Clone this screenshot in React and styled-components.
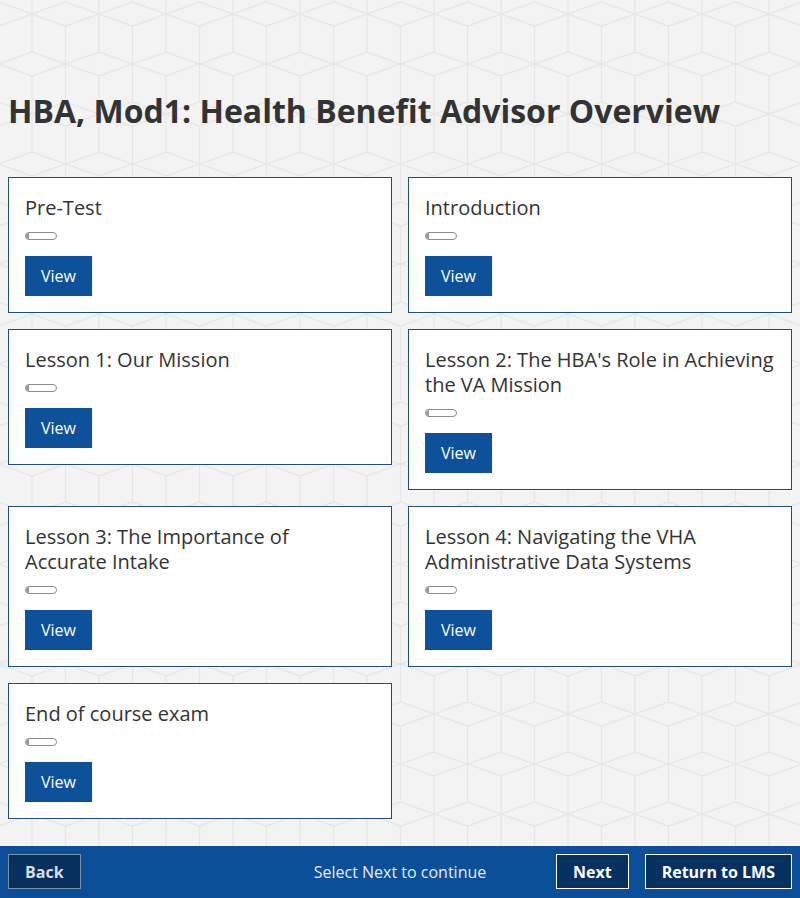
import React from "react";
import styled, { createGlobalStyle } from "styled-components";

const tile = `<svg xmlns='http://www.w3.org/2000/svg' width='67' height='100' viewBox='0 0 67 100'><g fill='none' stroke='#e6e6e6' stroke-width='1.3'><path d='M0 12 L33.5 0 L67 12 L33.5 24 Z'/><path d='M33.5 24 V62'/><path d='M0 12 V50 M67 12 V50'/><path d='M0 50 L33.5 62 L67 50'/><path d='M0 74 L33.5 62 L67 74'/><path d='M0 74 V100 M67 74 V100 M0 0 V12 M67 0 V12'/><path d='M33.5 62 V100'/></g></svg>`;

const GlobalStyle = createGlobalStyle`
  html, body {
    margin: 0;
    padding: 0;
  }
  body {
    font-family: "Open Sans", "Noto Sans", sans-serif;
    background-color: #f3f3f3;
    background-image: url("data:image/svg+xml,${encodeURIComponent(tile)}");
    background-position: 32px 2px;
    color: #333;
  }
  * { box-sizing: border-box; }
`;

const Page = styled.div`
  min-height: 100vh;
  display: flex;
  flex-direction: column;
`;

const Main = styled.main`
  flex: 1;
  padding: 0 8px 16px;
`;

const Title = styled.h1`
  margin: 89px 0 44px;
  font-size: 32px;
  line-height: 44px;
  font-weight: 700;
  color: #333;
`;

const Grid = styled.div`
  display: grid;
  grid-template-columns: 1fr 1fr;
  gap: 16px;
  align-items: start;
`;

const Card = styled.section`
  background: #fff;
  border: 1px solid #1f4e79;
  padding: 17px 16px 16px;
  display: flex;
  flex-direction: column;
  align-items: flex-start;
`;

const CardTitle = styled.h2`
  margin: 0;
  font-size: 20px;
  line-height: 25px;
  font-weight: 400;
  color: #333;
`;

const Progress = styled.div`
  margin-top: 12px;
  width: 32px;
  height: 8px;
  border: 1px solid #8c8c8c;
  border-radius: 4px;
  background: #fff;
  overflow: hidden;
  display: flex;
`;

const ProgressFill = styled.div`
  width: 3px;
  background: #9a9a9a;
`;

const ViewButton = styled.button`
  margin-top: 16px;
  height: 40px;
  padding: 0 16px;
  border: none;
  background: #0c5199;
  color: #fff;
  font-family: inherit;
  font-size: 16px;
  cursor: pointer;
`;

const Footer = styled.footer`
  height: 52px;
  background: #0b4f99;
  padding: 8px;
  display: grid;
  grid-template-columns: 1fr auto 1fr;
  align-items: start;
`;

const NavButton = styled.button`
  height: 35px;
  padding: 1px 16px 0;
  background: #06305e;
  border: 1px solid ${(p) => (p.$disabled ? "#7d8fa6" : "#ffffff")};
  color: ${(p) => (p.$disabled ? "#d6dde6" : "#ffffff")};
  font-family: inherit;
  font-size: 16px;
  font-weight: 700;
  cursor: pointer;
`;

const Message = styled.div`
  color: #e4ebf4;
  font-size: 16px;
  line-height: 37px;
`;

const Left = styled.div`
  display: flex;
  justify-content: flex-start;
`;

const Right = styled.div`
  display: flex;
  justify-content: flex-end;
  gap: 16px;
`;

const lessons = [
  "Pre-Test",
  "Introduction",
  "Lesson 1: Our Mission",
  "Lesson 2: The HBA's Role in Achieving the VA Mission",
  "Lesson 3: The Importance of Accurate Intake",
  "Lesson 4: Navigating the VHA Administrative Data Systems",
  "End of course exam",
];

export default function App() {
  return (
    <Page>
      <GlobalStyle />
      <Main>
        <Title>HBA, Mod1: Health Benefit Advisor Overview</Title>
        <Grid>
          {lessons.map((l) => (
            <Card key={l}>
              <CardTitle>{l}</CardTitle>
              <Progress>
                <ProgressFill />
              </Progress>
              <ViewButton>View</ViewButton>
            </Card>
          ))}
        </Grid>
      </Main>
      <Footer>
        <Left>
          <NavButton $disabled>Back</NavButton>
        </Left>
        <Message>Select Next to continue</Message>
        <Right>
          <NavButton>Next</NavButton>
          <NavButton>Return to LMS</NavButton>
        </Right>
      </Footer>
    </Page>
  );
}
